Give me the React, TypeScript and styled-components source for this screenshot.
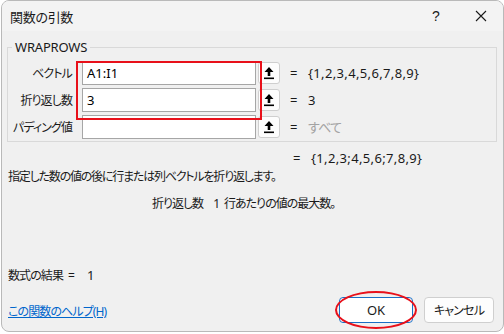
import React from "react";
import styled, { createGlobalStyle } from "styled-components";

const Global = createGlobalStyle`
  html, body { margin: 0; padding: 0; background: #ffffff; }
  body {
    font-family: "Noto Sans", "Noto Sans CJK JP", sans-serif;
    font-size: 12px;
    color: #1a1a1a;
    font-feature-settings: "palt";
  }
  * { box-sizing: border-box; }
`;

const Window = styled.div`
  margin-left: 1px;
  width: 503px;
  height: 332px;
  border: 1px solid #b9b9b9;
  border-radius: 8px;
  background: #f0f0f0;
  display: flex;
  flex-direction: column;
  overflow: hidden;
`;

const TitleBar = styled.div`
  height: 30px;
  flex: none;
  display: flex;
  align-items: center;
  background: #f3f3f3;
  padding-left: 8px;
  font-size: 13px;
  color: #1a1a1a;
`;

const TitleText = styled.div`
  flex: 1;
  padding-top: 1px;
  letter-spacing: -0.3px;
`;

const TitleButton = styled.div<{ $w: number }>`
  width: ${(p) => p.$w}px;
  height: 30px;
  display: flex;
  align-items: center;
  justify-content: center;
  font-size: 14px;
  font-family: "Liberation Sans", sans-serif;
`;

const Body = styled.div`
  flex: 1;
  display: flex;
  flex-direction: column;
  padding: 0 6px 0 5px;
`;

const Group = styled.fieldset`
  margin: 8px 0 0 0;
  padding: 4px 0 1px 0;
  border: 1px solid #d9d9d9;
  min-width: 0;
`;

const Legend = styled.legend`
  padding: 0 3px;
  margin-left: 4px;
  font-size: 13px;
  line-height: 16px;
  color: #1a1a1a;
  letter-spacing: -0.2px;
`;

const Rows = styled.div`
  position: relative;
  display: flex;
  flex-direction: column;
`;

const Row = styled.div`
  height: 27px;
  display: flex;
  align-items: center;
`;

const Label = styled.div`
  width: 64px;
  text-align: right;
  margin-right: 10px;
  font-size: 12px;
  letter-spacing: -0.9px;
  white-space: nowrap;
`;

const Input = styled.div`
  width: 174px;
  height: 24px;
  background: #ffffff;
  border: 1px solid #a6a6a6;
  display: flex;
  align-items: center;
  padding-left: 4px;
  font-size: 13px;
  color: #000;
`;

const RefButton = styled.div`
  width: 22px;
  height: 22px;
  margin-left: 2px;
  background: #fdfdfd;
  border: 1px solid #cfcfcf;
  border-radius: 3px;
  display: flex;
  align-items: center;
  justify-content: center;
`;

const Equals = styled.div`
  margin-left: 10px;
  width: 8px;
  font-size: 13px;
`;

const Value = styled.div<{ $muted?: boolean }>`
  margin-left: 10px;
  font-size: 13px;
  letter-spacing: ${(p) => (p.$muted ? "-0.8px" : "0.35px")};
  color: ${(p) => (p.$muted ? "#a3a3a3" : "#1a1a1a")};
`;

const Highlight = styled.div`
  position: absolute;
  left: 68px;
  top: 2px;
  width: 186px;
  height: 59px;
  border: 2px solid #e8101a;
  pointer-events: none;
`;

const ResultLine = styled.div`
  margin-top: 7px;
  height: 18px;
  display: flex;
  align-items: center;
  padding-left: 276px;
  font-size: 13px;
`;

const Description = styled.div`
  height: 18px;
  display: flex;
  align-items: center;
  padding-left: 1px;
  font-size: 12px;
  letter-spacing: -1.2px;
`;

const ArgHelp = styled.div`
  margin-top: 9px;
  height: 18px;
  display: flex;
  align-items: center;
  padding-left: 145px;
  font-size: 12px;
  letter-spacing: -1px;
`;

const ArgNumber = styled.span`
  margin: 0 5px 0 10px;
`;

const FormulaResult = styled.div`
  margin-top: 54px;
  height: 18px;
  display: flex;
  align-items: center;
  padding-left: 1px;
  font-size: 12px;
  letter-spacing: -0.9px;
`;

const ResultEq = styled.span`
  margin-left: 5px;
`;

const ResultNumber = styled.span`
  margin-left: 13px;
  font-size: 13px;
`;

const Footer = styled.div`
  margin-top: 13px;
  display: flex;
  align-items: center;
  padding-right: 3px;
`;

const HelpLink = styled.a`
  flex: 1;
  color: #0066cc;
  text-decoration: underline;
  font-size: 12px;
  letter-spacing: -0.9px;
  padding-left: 1px;
  margin-top: 2px;
`;

const ButtonWrap = styled.div`
  position: relative;
  margin-right: 11px;
`;

const DialogButton = styled.div<{ $primary?: boolean; $w: number }>`
  width: ${(p) => p.$w}px;
  height: 26px;
  border-radius: 4px;
  background: ${(p) => (p.$primary ? "#ffffff" : "#fdfdfd")};
  border: 1px solid ${(p) => (p.$primary ? "#1a6fc4" : "#cfcfcf")};
  display: flex;
  align-items: center;
  justify-content: center;
  font-size: ${(p) => (p.$primary ? "13px" : "12px")};
  letter-spacing: ${(p) => (p.$primary ? "0" : "-0.8px")};
  color: #1a1a1a;
`;

const Ellipse = styled.div`
  position: absolute;
  left: -4px;
  top: -6px;
  width: 82px;
  height: 38px;
  border: 2px solid #e8101a;
  border-radius: 50%;
  pointer-events: none;
`;

const UpIcon = () => (
  <svg width="12" height="14" viewBox="0 0 12 14">
    <path d="M6 1 L10.5 6 H7.3 V10 H4.7 V6 H1.5 Z" fill="#000" />
    <rect x="1" y="11.5" width="10" height="1.6" fill="#000" />
  </svg>
);

const CloseIcon = () => (
  <svg width="12" height="12" viewBox="0 0 12 12">
    <path d="M1 1 L11 11 M11 1 L1 11" stroke="#1a1a1a" strokeWidth="1.1" />
  </svg>
);

const args = [
  { label: "ベクトル", value: "A1:I1", result: "{1,2,3,4,5,6,7,8,9}" },
  { label: "折り返し数", value: "3", result: "3" },
  { label: "パディング値", value: "", result: "すべて", muted: true },
];

export default function App() {
  return (
    <>
      <Global />
      <Window>
        <TitleBar>
          <TitleText>関数の引数</TitleText>
          <TitleButton $w={46}>?</TitleButton>
          <TitleButton $w={44}>
            <CloseIcon />
          </TitleButton>
        </TitleBar>
        <Body>
          <Group>
            <Legend>WRAPROWS</Legend>
            <Rows>
              {args.map((a) => (
                <Row key={a.label}>
                  <Label>{a.label}</Label>
                  <Input>{a.value}</Input>
                  <RefButton>
                    <UpIcon />
                  </RefButton>
                  <Equals>=</Equals>
                  <Value $muted={a.muted}>{a.result}</Value>
                </Row>
              ))}
              <Highlight />
            </Rows>
          </Group>
          <ResultLine>
            <Equals>=</Equals>
            <Value>{"{1,2,3;4,5,6;7,8,9}"}</Value>
          </ResultLine>
          <Description>指定した数の値の後に行または列ベクトルを折り返します。</Description>
          <ArgHelp>
            折り返し数<ArgNumber>1</ArgNumber>行あたりの値の最大数。
          </ArgHelp>
          <FormulaResult>
            数式の結果<ResultEq>=</ResultEq>
            <ResultNumber>1</ResultNumber>
          </FormulaResult>
          <Footer>
            <HelpLink>この関数のヘルプ(H)</HelpLink>
            <ButtonWrap>
              <DialogButton $primary $w={74}>OK</DialogButton>
              <Ellipse />
            </ButtonWrap>
            <DialogButton $w={70}>キャンセル</DialogButton>
          </Footer>
        </Body>
      </Window>
    </>
  );
}
